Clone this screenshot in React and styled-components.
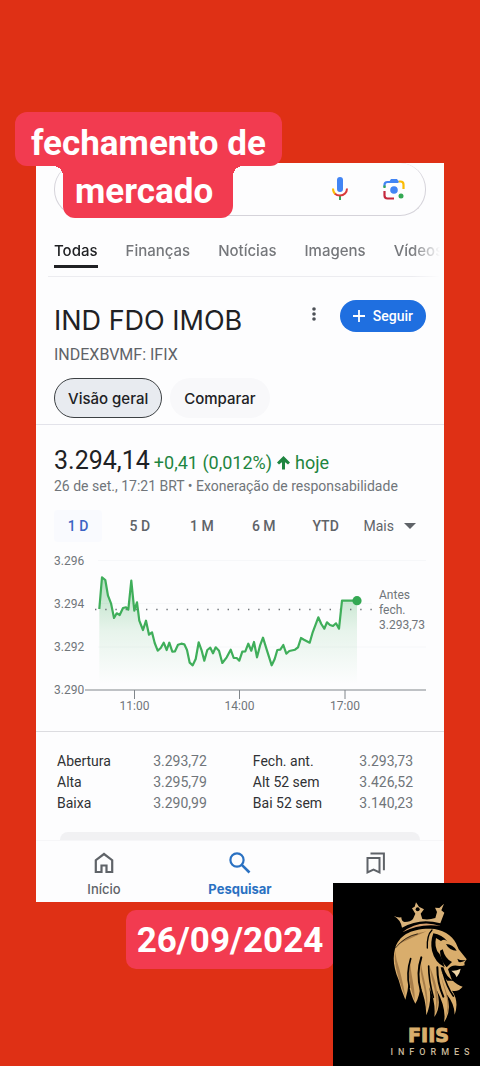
import React from "react";
import styled, { createGlobalStyle, css } from "styled-components";

const App = () => {
  return (
    <>
      <GlobalStyle />
      <Page>
        <Caption>
          <CaptionLine>fechamento de</CaptionLine>
          <CaptionLine $second>mercado</CaptionLine>
        </Caption>

        <Card>
          <SearchBar>
            <IconButton aria-label="Pesquisa por voz">
              <MicIcon />
            </IconButton>
            <IconButton aria-label="Lens">
              <LensIcon />
            </IconButton>
          </SearchBar>

          <Tabs>
            {tabs.map((tab, i) => (
              <Tab key={tab} href="#" $active={i === 0}>
                {tab}
              </Tab>
            ))}
          </Tabs>

          <Header>
            <HeaderRow>
              <Title>IND FDO IMOB</Title>
              <MoreButton aria-label="Mais opções">
                <svg width="6" height="16" viewBox="0 0 6 16" fill="#4d5156">
                  <circle cx="3" cy="3" r="1.8" />
                  <circle cx="3" cy="8" r="1.8" />
                  <circle cx="3" cy="13" r="1.8" />
                </svg>
              </MoreButton>
              <FollowButton>
                <svg width="12" height="12" viewBox="0 0 12 12">
                  <path d="M6 0v12M0 6h12" stroke="#fff" strokeWidth="1.8" />
                </svg>
                Seguir
              </FollowButton>
            </HeaderRow>
            <Ticker>INDEXBVMF: IFIX</Ticker>
            <Chips>
              <Chip $active>Visão geral</Chip>
              <Chip>Comparar</Chip>
            </Chips>
          </Header>

          <Quote>
            <PriceRow>
              <Price>3.294,14</Price>
              <Change>
                +0,41 (0,012%)
                <svg width="13" height="14" viewBox="0 0 13 14">
                  <path
                    d="M6.5 13.5V4"
                    fill="none"
                    stroke="#1e8540"
                    strokeWidth="3"
                  />
                  <path d="M6.5 0L13 6.6L11 8.6L6.5 5L2 8.6L0 6.6z" fill="#1e8540" />
                </svg>
                hoje
              </Change>
            </PriceRow>
            <Stamp>26 de set., 17:21 BRT • Exoneração de responsabilidade</Stamp>
            <Ranges>
              {ranges.map((range, i) => (
                <Range key={range} $active={i === 0}>
                  {range}
                </Range>
              ))}
              <Range $more>
                Mais
                <svg width="12" height="6" viewBox="0 0 12 6">
                  <path d="M0 0h12L6 6z" fill="#5f6368" />
                </svg>
              </Range>
            </Ranges>
            <PriceChart />
          </Quote>

          <Stats>
            <tbody>
              {stats.map(([a, b, c, d]) => (
                <tr key={a}>
                  <th scope="row">{a}</th>
                  <td>{b}</td>
                  <th scope="row">{c}</th>
                  <td>{d}</td>
                </tr>
              ))}
            </tbody>
          </Stats>
          <NextButton />

          <Nav>
            <NavItem href="#">
              <svg width="24" height="24" viewBox="0 0 24 24">
                <path
                  d="M3.8 21V9.2L12 3l8.2 6.2V21h-5.7v-6.5h-5V21z"
                  fill="none"
                  stroke="#5f6368"
                  strokeWidth="2.2"
                />
              </svg>
              Início
            </NavItem>
            <NavItem href="#" $active>
              <svg width="24" height="24" viewBox="0 0 24 24">
                <g fill="none" stroke="#2a71c2" strokeWidth="2.2">
                  <circle cx="9" cy="9" r="6.6" />
                  <path d="M13.8 13.8L21.5 21.5" strokeWidth="2.6" />
                </g>
              </svg>
              Pesquisar
            </NavItem>
            <NavItem href="#" aria-label="Salvos">
              <svg width="24" height="24" viewBox="0 0 24 24">
                <g fill="none" stroke="#5f6368" strokeWidth="2">
                  <path d="M3.5 7h12v14.500l-6-2.8l-6 2.8z" />
                  <path d="M6.5 2.6h13.4v16.6" />
                </g>
              </svg>
            </NavItem>
          </Nav>
        </Card>

        <DateLabel>26/09/2024</DateLabel>
        <Brand />
      </Page>
    </>
  );
};

export default App;

const tabs = ["Todas", "Finanças", "Notícias", "Imagens", "Vídeos"];

const ranges = ["1 D", "5 D", "1 M", "6 M", "YTD"];

const stats = [
  ["Abertura", "3.293,72", "Fech. ant.", "3.293,73"],
  ["Alta", "3.295,79", "Alt 52 sem", "3.426,52"],
  ["Baixa", "3.290,99", "Bai 52 sem", "3.140,23"],
];

const line =
  "45.3,55 48,23.3 51.3,26 54,41.7 57,49.3 60,64 62.7,59.3 65.7,61 69,54 72,53.3 74.3,55.7 77.3,26.7 80.3,56.7 83,48.3 85.3,66.7 89,76 92,66.7 95,80.7 98,78.3 100.7,89 103.7,96.7 106.7,94 109.7,88.7 112.7,96 115.3,88.7 118.3,97.7 121,97.3 124,90.7 127.3,89.7 130.3,90.3 133,96 135.7,108.7 138.7,111.3 141.7,105 144.7,88.3 147.7,96.7 150.3,106.7 153.3,96 156.3,93.7 159,99.3 161.7,93.3 165,96.7 168.3,109 172.7,103.3 176.7,95.7 179.7,104 182.7,104 185.3,106.7 188.3,97.7 191.3,97.3 194.3,89.7 197.3,96.7 200,88 203,103.3 206,91.7 209,83.7 212,93.3 217.7,111.3 220.7,105 223.3,96 226.3,95.7 229.3,91 232.3,99.7 235.3,97 241,95.7 244,93.3 247,84 250,85.7 255.7,88.7 258.7,78.3 264.3,63.3 267.3,70 270.3,74.7 273,68.3 276,71 279,72 282,69.3 285,74.7 288,46.7 303,46.7";

const PriceChart = () => (
  <Chart viewBox="0 0 372 162" role="img" aria-label="IFIX, 1 dia">
    <defs>
      <linearGradient id="area" x1="0" y1="0" x2="0" y2="1">
        <stop offset="0" stopColor="#34a853" stopOpacity="0.36" />
        <stop offset="0.5" stopColor="#34a853" stopOpacity="0.11" />
        <stop offset="1" stopColor="#34a853" stopOpacity="0" />
      </linearGradient>
    </defs>
    <path d="M44 6.5H372M44 49.5H318M44 93H372" stroke="#f6f7f9" />
    <polygon points={`45.3,130 ${line} 303,130`} fill="url(#area)" />
    <path
      d="M41 55.5H320"
      stroke="#70757a"
      strokeWidth="1.4"
      strokeDasharray="1.4 8.8"
    />
    <path d="M31 136H372M80.5 136v9M185.5 136v9M291 136v9" stroke="#80868b" />
    <polyline
      points={line}
      fill="none"
      stroke="#3fae5a"
      strokeWidth="2.2"
      strokeLinejoin="round"
    />
    <circle cx="303" cy="46.7" r="4.6" fill="#34a853" />
    <text x="0" y="11">3.296</text>
    <text x="0" y="54">3.294</text>
    <text x="0" y="97">3.292</text>
    <text x="0" y="140">3.290</text>
    <g textAnchor="middle">
      <text x="80.5" y="156">11:00</text>
      <text x="185.5" y="156">14:00</text>
      <text x="291" y="156">17:00</text>
    </g>
    <text x="325" y="45">Antes</text>
    <text x="325" y="60">fech.</text>
    <text x="325" y="75">3.293,73</text>
  </Chart>
);

const MicIcon = () => (
  <svg width="24" height="24" viewBox="0 0 24 24" fill="none">
    <rect x="9" y="0" width="6" height="15" rx="3" fill="#4285f4" />
    <path d="M12 18v5" stroke="#34a853" strokeWidth="2" />
    <path d="M5 11.5c0 2.5 1 4.5 2.5 5.7" stroke="#fbbc04" strokeWidth="2" />
    <path
      d="M7 16.7c1.3 1.3 3 1.8 5 1.8c4 0 7-3 7-7"
      stroke="#d93a3a"
      strokeWidth="2"
    />
  </svg>
);

const LensIcon = () => (
  <svg width="24" height="24" viewBox="0 0 24 24" fill="none">
    <g strokeWidth="2.2">
      <path d="M2.5 10V8q0-3 3-3h11" stroke="#4285f4" />
      <path d="M2.5 11V8.5" stroke="#34a853" />
      <path d="M16.5 4.5h2q3 0 3 3V12" stroke="#fbbc04" />
      <path d="M2.5 14v4.5q0 3 3 3H12" stroke="#c5283d" />
    </g>
    <path d="M7 5l2-3h6l2 3z" fill="#4285f4" />
    <circle cx="12" cy="13" r="3.8" fill="#4285f4" />
    <circle cx="19" cy="19" r="2.5" fill="#34a853" />
  </svg>
);

const Brand = () => (
  <BrandBox>
    <svg width="100%" viewBox="9 9 441 420" aria-hidden="true">
      {/* crown */}
      <path
        d="M191 107Q202 114 214 112Q214 124 224 126Q242 126 249 117L256 101L246 85L254 80L258 67L267 80L282 88L272 101L277 117Q296 121 316 114L321 96L315 83L328 84L342 71L334 91L343 98L331 130Q270 112 216 143Q213 120 191 107Z"
        fill="#d9b27a"
      />
      <circle cx="263" cy="88" r="6" fill="#000" />
      <path d="M217 157Q268 116 332 138Q270 129 217 157Z" fill="#d9a06c" />
      {/* mane */}
      <path
        d="M195 206C206 168 240 145 302 146C334 146 368 166 378 190L386 208L410 238L403 248L404 256Q390 262 362 262Q356 284 366 300Q382 316 398 320Q386 336 366 332Q388 364 374 404Q374 372 348 340Q368 388 342 427Q350 386 320 330Q336 378 313 411Q318 370 298 322Q306 366 289 406Q288 358 270 318Q270 348 256 371Q240 342 236 306Q234 334 226 359Q214 332 206 300C190 262 188 232 195 206Z"
        fill="#d9ad6c"
      />
      <g fill="#a67c48">
        <path d="M195 212C190 250 206 300 226 350Q216 290 200 240Z" />
        <path d="M240 235C230 280 240 320 254 362C256 320 240 280 240 235Z" />
        <path d="M272 240C266 290 290 320 290 390C300 340 276 290 272 240Z" />
        <path d="M300 262C304 310 326 340 316 400C334 360 316 300 300 262Z" />
        <path d="M334 290C340 330 364 360 346 414C368 370 346 330 334 290Z" />
        <path d="M200 196Q232 162 290 154Q238 176 200 196Z" />
      </g>
      {/* gaps between strands */}
      <g fill="none" stroke="#000" strokeLinecap="round">
        <path d="M242 236Q228 280 238 322" strokeWidth="5" />
        <path d="M274 232Q258 280 272 330" strokeWidth="6" />
        <path d="M296 258Q296 300 310 352" strokeWidth="5" />
        <path d="M322 262Q322 310 340 350" strokeWidth="6" />
        <path d="M340 280Q350 320 370 348" strokeWidth="5" />
        <path d="M196 204Q226 168 262 162" strokeWidth="2" />
        <path d="M306 150Q290 166 292 204" strokeWidth="4" />
      </g>
      {/* face */}
      <path
        d="M310 160Q300 188 306 212Q314 246 344 262Q336 230 322 212Q322 192 334 182Q344 176 352 184Q336 164 310 160Z"
        fill="#000"
      />
      <path d="M318 174Q312 200 326 220Q322 196 334 184Z" fill="#d9ad6c" />
      <path d="M338 208Q346 238 366 246L350 262Q330 240 330 212Z" fill="#000" />
      <path d="M348 192Q368 192 380 212Q358 212 348 192Z" fill="#000" />
      <path d="M382 236Q392 242 408 240Q398 248 386 246Z" fill="#000" />
      <path
        d="M354 268Q364 252 388 258L404 257L396 270Q392 286 382 294L360 284Z"
        fill="#000"
      />
      <path d="M364 272Q378 274 392 266Q390 280 380 292Q376 280 364 272Z" fill="#f0d5a4" />
      <path
        d="M340 262Q350 296 372 302L352 302Q336 286 332 262Z"
        fill="#000"
      />
    </svg>
    <BrandName>FIIS</BrandName>
    <BrandTag>INFORMES</BrandTag>
  </BrandBox>
);

const GlobalStyle = createGlobalStyle`
  * {
    box-sizing: border-box;
  }
  body {
    margin: 0;
    background: #df3015;
    font-family: Roboto, sans-serif;
  }
  button {
    font-family: inherit;
    border: none;
    background: none;
    padding: 0;
  }
  a {
    text-decoration: none;
  }
`;

const rounded = "Inter, sans-serif";

const Page = styled.main`
  position: relative;
  min-height: 100vh;
  padding: 163px 36px 90px;
  display: flex;
  flex-direction: column;
`;

const Caption = styled.h1`
  position: absolute;
  top: 112px;
  left: 15px;
  margin: 0;
  z-index: 1;
  display: flex;
  flex-direction: column;
  align-items: flex-start;
  color: white;
  font-size: 35px;
  line-height: 54px;
  font-weight: 700;
`;

const CaptionLine = styled.span`
  position: relative;
  background: #f23b50;
  border-radius: 12px;
  padding: 5px 16px 0;
  height: 54px;

  ${({ $second }) =>
    $second &&
    css`
      height: 52px;
      margin-left: 48px;
      padding: 0 20px 0 12px;
      line-height: 52px;
      border-radius: 0 0 12px 12px;

      /* concave corners where the two lines meet */
      &::before,
      &::after {
        content: "";
        position: absolute;
        top: 0;
        width: 10px;
        height: 10px;
      }
      &::before {
        right: 100%;
        background: radial-gradient(
          circle at 0 100%,
          transparent 10px,
          #f23b50 10px
        );
      }
      &::after {
        left: 100%;
        background: radial-gradient(
          circle at 100% 100%,
          transparent 10px,
          #f23b50 10px
        );
      }
    `}
`;

const Card = styled.section`
  background: #fdfdfe;
  overflow: hidden;
`;

const SearchBar = styled.div`
  display: flex;
  justify-content: flex-end;
  align-items: center;
  gap: 30px;
  height: 53px;
  margin: 0 18px;
  padding-right: 19px;
  border: 1px solid #d5d3da;
  border-top: none;
  border-radius: 26px;
`;

const IconButton = styled.button`
  display: flex;
`;

const Tabs = styled.nav`
  display: flex;
  gap: 28px;
  height: 61px;
  margin-left: 12px;
  padding: 22px 0 0 6px;
  border-bottom: 1px solid #ececf0;
  overflow: hidden;
  mask-image: linear-gradient(to right, black 92%, transparent 99%);
`;

const Tab = styled.a`
  font-family: ${rounded};
  font-size: 15px;
  line-height: 26px;
  height: 30px;
  font-weight: 500;
  white-space: nowrap;
  color: #75777b;

  ${({ $active }) =>
    $active &&
    css`
      color: #202124;
      border-bottom: 3px solid #202124;
    `}
`;

const Header = styled.header`
  padding: 23px 18px 6px;
  border-bottom: 1px solid #e3e3ea;
`;

const HeaderRow = styled.div`
  display: flex;
  align-items: flex-start;
`;

const Title = styled.h2`
  flex: 1;
  margin: 0;
  padding-top: 3px;
  font-family: ${rounded};
  font-size: 27px;
  line-height: 36px;
  font-weight: 400;
  color: #202124;
`;

const MoreButton = styled.button`
  display: flex;
  margin: 6px 23px 0 0;
`;

const FollowButton = styled.button`
  display: flex;
  align-items: center;
  gap: 8px;
  height: 32px;
  padding: 0 13px;
  border-radius: 16px;
  background: #1f6fe0;
  color: white;
  font-size: 14px;
  font-weight: 500;
`;

const Ticker = styled.div`
  margin-top: 6px;
  font-size: 16px;
  line-height: 20px;
  color: #5f6368;
`;

const Chips = styled.div`
  display: flex;
  gap: 8px;
  margin-top: 13px;
`;

const Chip = styled.button`
  height: 40px;
  padding: 0 13px;
  border-radius: 20px;
  border: 1px solid transparent;
  background: #f8f8fa;
  font-family: ${rounded};
  font-size: 15px;
  font-weight: 500;
  color: #202124;

  ${({ $active }) =>
    $active &&
    css`
      background: #e8ebf0;
      border-color: #3c4043;
    `}
`;

const Quote = styled.section`
  padding: 22px 18px 15px;
  border-bottom: 1px solid #dcdce0;
`;

const PriceRow = styled.div`
  display: flex;
  align-items: baseline;
  gap: 4px;
  line-height: 28px;
`;

const Price = styled.span`
  font-size: 25px;
  color: #202124;
`;

const Change = styled.span`
  font-size: 18px;
  color: #1e8540;

  svg {
    margin: 0 5px -1px;
  }
`;

const Stamp = styled.div`
  font-size: 14px;
  line-height: 18px;
  color: #70757a;
`;

const Ranges = styled.div`
  display: flex;
  justify-content: space-between;
  margin-top: 15px;
  padding-right: 10px;
`;

const Range = styled.button`
  display: flex;
  align-items: center;
  justify-content: center;
  gap: 10px;
  height: 32px;
  min-width: 48px;
  border-radius: 4px;
  font-size: 14px;
  font-weight: 500;
  color: #5f6368;

  ${({ $active }) =>
    $active &&
    css`
      background: #f9fafe;
      color: #3b62c4;
    `}

  ${({ $more }) =>
    $more &&
    css`
      font-weight: 400;
    `}
`;

const Chart = styled.svg`
  display: block;
  width: 100%;
  margin-top: 12px;

  text {
    font-size: 12px;
    fill: #70757a;
  }
`;

const Stats = styled.table`
  width: calc(100% - 52px);
  margin: 19px 31px 0 21px;
  border-collapse: collapse;
  table-layout: fixed;
  font-size: 14px;
  line-height: 21px;

  th,
  td {
    padding: 0;
  }
  th {
    font-weight: 400;
    text-align: left;
    color: #303134;
  }
  th:first-child {
    width: 25%;
  }
  td {
    text-align: right;
    color: #70757a;
  }
  td:nth-child(2) {
    width: 30%;
    padding-right: 46px;
  }
`;

const NextButton = styled.div`
  height: 8px;
  margin: 18px 24px 0;
  border-radius: 20px 20px 0 0;
  background: #f1f1f3;
`;

const Nav = styled.nav`
  display: grid;
  grid-template-columns: repeat(3, 1fr);
  height: 62px;
  padding-top: 10px;
  border-top: 1px solid #f6f6f8;
`;

const NavItem = styled.a`
  display: flex;
  flex-direction: column;
  align-items: center;
  gap: 4px;
  font-family: ${rounded};
  font-size: 13px;
  line-height: 20px;
  color: ${({ $active }) => ($active ? "#2a71c2" : "#5f6368")};
  font-weight: ${({ $active }) => ($active ? 700 : 500)};
`;

const DateLabel = styled.div`
  align-self: center;
  margin: 8px 0 0 -20px;
  padding: 3px 11px 0;
  border-radius: 10px;
  background: #f23b50;
  color: white;
  font-size: 35px;
  line-height: 56px;
  font-weight: 700;
`;

const BrandBox = styled.aside`
  position: absolute;
  right: 0;
  bottom: 0;
  width: 147px;
  height: 183px;
  background: black;
  color: #d9ad6c;
  text-align: center;

  svg {
    display: block;
  }
`;

const BrandName = styled.div`
  padding-left: 44px;
  font-family: "DejaVu Sans", sans-serif;
  font-size: 19px;
  line-height: 24px;
  font-weight: 700;
  -webkit-text-stroke: 1px #d9ad6c;
`;

const BrandTag = styled.div`
  padding-left: 52px;
  font-size: 9px;
  line-height: 10px;
  font-weight: 500;
  letter-spacing: 5px;
  color: #c9b89a;
`;
